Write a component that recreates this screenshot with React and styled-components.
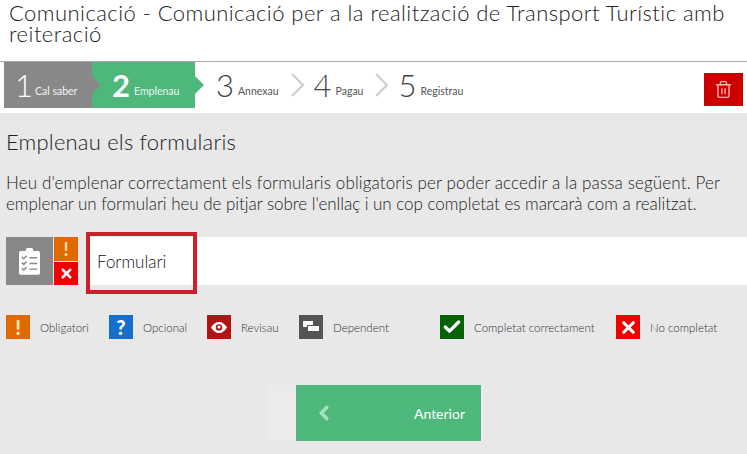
import React from 'react';
import styled, { createGlobalStyle } from 'styled-components'
import { Trash2, ChevronLeft, Check, X } from 'lucide-react'

const GlobalStyle = createGlobalStyle`
  html, body { margin: 0; padding: 0; }
  body {
    width: 747px;
    height: 454px;
    overflow: hidden;
    background: #e8e8e8;
    font-family: Lato, "Open Sans", sans-serif;
    color: #444;
  }
`

const Header = styled.header`
  height: 62px;
  box-sizing: border-box;
  padding: 0 9px;
  background: #fff;
  border-bottom: 1px solid #aaa;
`

const Title = styled.h1`
  margin: 0;
  padding-top: 2px;
  font-size: 22px;
  line-height: 21px;
  font-weight: 300;
  letter-spacing: 0.45px;
  color: #222;
`

const StepBar = styled.nav`
  height: 51px;
  box-sizing: border-box;
  padding: 0 4px 5px;
  display: flex;
  background: #fff;
`

const Step = styled.div`
  position: relative;
  display: flex;
  align-items: center;
  gap: ${p => p.$gap}px;
  height: 46px;
  box-sizing: border-box;
  padding-left: ${p => p.$left || 0}px;
  width: ${p => p.$width ? p.$width + 'px' : 'auto'};
  margin-left: ${p => p.$offset || 0}px;
  background: ${p => p.$bg || 'transparent'};
  color: ${p => p.$bg ? '#fff' : '#444'};
`

const StepTip = styled.span`
  position: absolute;
  z-index: 1;
  top: 14px;
  right: -9px;
  width: 0;
  height: 0;
  border-top: 9px solid transparent;
  border-bottom: 9px solid transparent;
  border-left: 9px solid ${p => p.$color};
`

const StepNumber = styled.span`
  font-size: 31px;
  line-height: 46px;
  font-weight: ${p => p.$bold ? 700 : 300};
`

const StepLabel = styled.span`
  font-size: 10.5px;
  font-weight: 400;
  margin-top: 12px;
  opacity: 0.9;
`

const Separator = styled.svg`
  width: 14px;
  height: 24px;
  align-self: center;
  margin: 0 9px 0 12px;
  fill: none;
  stroke: #ccc;
  stroke-width: 2;
`

const TrashButton = styled.button`
  width: 39px;
  height: 33px;
  margin: 11px 0 0 auto;
  padding: 0;
  border: none;
  display: flex;
  align-items: center;
  justify-content: center;
  background: #cc0000;
  color: #ffb3b3;
`

const Main = styled.main`
  padding: 15px 6px 0;
`

const Subtitle = styled.h2`
  margin: 0;
  font-size: 22px;
  line-height: 28px;
  font-weight: 300;
  letter-spacing: 0.2px;
  color: #222;
`

const Intro = styled.p`
  margin: 16px 0 0;
  font-size: 17px;
  line-height: 21px;
  font-weight: 300;
  color: #222;
  white-space: nowrap;
`

const IntroLine = styled.span`
  display: block;
  letter-spacing: ${p => p.$tracking}px;
`

const FormRow = styled.div`
  display: flex;
  height: 48px;
  margin: 23px -6px 0 0;
`

const FormIcon = styled.div`
  width: 47px;
  height: 48px;
  display: flex;
  align-items: center;
  justify-content: center;
  background: #888;
`

const StatusColumn = styled.div`
  width: 24px;
  margin-left: 1px;
  display: flex;
  flex-direction: column;
  gap: 1px;
`

const StatusBox = styled.div`
  flex: 1;
  display: flex;
  align-items: center;
  justify-content: center;
  background: ${p => p.$bg};
  color: #ffe0b0;
  font-size: 18px;
  font-weight: 700;
`

const FormLink = styled.div`
  flex: 1;
  margin-left: 8px;
  position: relative;
  display: flex;
  align-items: center;
  padding-left: 11px;
  background: #fff;
  font-size: 17px;
  font-weight: 300;
  color: #111;
`

const Highlight = styled.span`
  position: absolute;
  left: 0;
  top: -5px;
  width: 111px;
  height: 62px;
  box-sizing: border-box;
  border: 4px solid #c9202a;
`

const Legend = styled.div`
  display: flex;
  align-items: center;
  margin-top: 30px;
`

const LegendItem = styled.div`
  display: flex;
  align-items: center;
  gap: 10px;
  width: ${p => p.$width}px;
  font-size: 11.5px;
  font-weight: 300;
  color: #333;
`

const LegendIcon = styled.span`
  width: 24px;
  height: 24px;
  flex: none;
  display: flex;
  align-items: center;
  justify-content: center;
  background: ${p => p.$bg};
  color: ${p => p.$ink || '#fff'};
  font-size: 20px;
  font-weight: 900;
`

const Footer = styled.div`
  display: flex;
  width: fit-content;
  margin: 46px 0 0 262px;
  padding: 0 3px 0 28px;
  background: #ebebeb;
`

const BackButton = styled.button`
  width: 185px;
  height: 56px;
  padding: 0 16px 0 17px;
  border: none;
  display: flex;
  align-items: center;
  justify-content: space-between;
  background: #4eb87c;
  color: #fff;
  font-family: Lato, sans-serif;
  font-size: 14px;
`

const EyeIcon = () => (
  <svg width="16" height="11" viewBox="0 0 16 11">
    <path fill="#fff" d="M0 5.5C2 2 5 0 8 0s6 2 8 5.5C14 9 11 11 8 11S2 9 0 5.5z" />
    <circle cx="8" cy="5.5" r="3.2" fill="#b01414" />
    <circle cx="8" cy="5" r="1.6" fill="#fff" />
  </svg>
)

const DependentIcon = () => (
  <svg width="16" height="14" viewBox="0 0 16 14" fill="#fff">
    <path d="M0 1h10v4H4v2H0z" />
    <path d="M5 6h11v5H5z" />
  </svg>
)

const ClipboardIcon = () => (
  <svg width="21" height="27" viewBox="0 0 22 28">
    <path fill="#fff" d="M2 3h5a4 4 0 0 1 8 0h5a2 2 0 0 1 2 2v21a2 2 0 0 1-2 2H2a2 2 0 0 1-2-2V5a2 2 0 0 1 2-2z" />
    <g fill="none" stroke="#888" strokeWidth="1.5">
      <path d="M3 9l2 2 3-3M3 15l2 2 3-3M3 21l2 2 3-3" />
      <path d="M11 10h8M11 16h8M11 22h8" />
    </g>
  </svg>
)

const steps = [
  { n: 3, label: 'Annexau' },
  { n: 4, label: 'Pagau' },
  { n: 5, label: 'Registrau' },
]

const legend = [
  { label: 'Obligatori', bg: '#e06a00', ink: '#ffe0b0', icon: '!', width: 103 },
  { label: 'Opcional', bg: '#1470cc', icon: '?', width: 98 },
  { label: 'Revisau', bg: '#b01414', icon: <EyeIcon />, width: 92 },
  { label: 'Dependent', bg: '#555', icon: <DependentIcon />, width: 141 },
  { label: 'Completat correctament', bg: '#056305', icon: <Check size={20} strokeWidth={4} />, width: 176 },
  { label: 'No completat', bg: '#f00000', icon: <X size={19} strokeWidth={4} />, width: 120 },
]

const App = () => (
  <>
    <GlobalStyle />
    <Header>
      <Title>Comunicació - Comunicació per a la realització de Transport Turístic amb reiteració</Title>
    </Header>

    <StepBar>
      <Step $bg="#888" $width={88} $left={11} $gap={2}>
        <StepNumber>1</StepNumber>
        <StepLabel>Cal saber</StepLabel>
        <StepTip $color="#888" />
      </Step>
      <Step $bg="#4eb87c" $width={103} $left={20} $gap={4}>
        <StepNumber $bold>2</StepNumber>
        <StepLabel>Emplenau</StepLabel>
        <StepTip $color="#4eb87c" />
      </Step>
      {steps.map((s, i) => (
        <React.Fragment key={s.n}>
          <Step $gap={4} $offset={i === 0 ? 21 : 0}>
            <StepNumber>{s.n}</StepNumber>
            <StepLabel>{s.label}</StepLabel>
          </Step>
          {i < steps.length - 1 && (
            <Separator viewBox="0 0 14 24"><path d="M1 1l11 11L1 23" /></Separator>
          )}
        </React.Fragment>
      ))}
      <TrashButton aria-label="Esborra"><Trash2 size={19} strokeWidth={1.75} /></TrashButton>
    </StepBar>

    <Main>
      <Subtitle>Emplenau els formularis</Subtitle>
      <Intro>
        <IntroLine $tracking={0.13}>Heu d'emplenar correctament els formularis obligatoris per poder accedir a la passa següent. Per</IntroLine>
        <IntroLine $tracking={-0.04}>emplenar un formulari heu de pitjar sobre l'enllaç i un cop completat es marcarà com a realitzat.</IntroLine>
      </Intro>

      <FormRow>
        <FormIcon><ClipboardIcon /></FormIcon>
        <StatusColumn>
          <StatusBox $bg="#e06a00">!</StatusBox>
          <StatusBox $bg="#f00000"><X size={15} strokeWidth={4} color="#fff" /></StatusBox>
        </StatusColumn>
        <FormLink>
          Formulari
          <Highlight />
        </FormLink>
      </FormRow>

      <Legend>
        {legend.map(item => (
          <LegendItem key={item.label} $width={item.width}>
            <LegendIcon $bg={item.bg} $ink={item.ink}>{item.icon}</LegendIcon>
            {item.label}
          </LegendItem>
        ))}
      </Legend>

      <Footer>
        <BackButton>
          <ChevronLeft size={22} strokeWidth={4} color="#a5e3bf" />
          Anterior
        </BackButton>
      </Footer>
    </Main>
  </>
)

export default App;
